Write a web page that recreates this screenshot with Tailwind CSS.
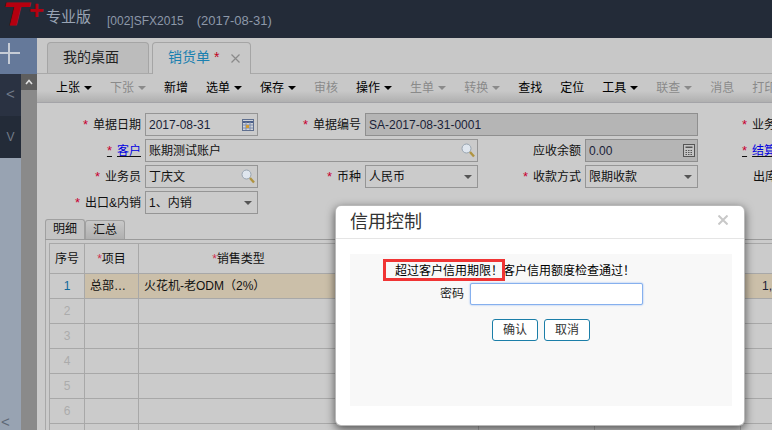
<!DOCTYPE html>
<html lang="zh-CN">
<head>
  <meta charset="UTF-8">
  <title>销货单</title>
  <script src="https://cdn.jsdelivr.net/npm/@tailwindcss/browser@4"></script>
</head>

<body class="w-[772px] h-[430px] overflow-hidden bg-[#c8c8c8] font-['Liberation_Sans','Noto_Sans_CJK_SC',sans-serif] text-[12px] leading-[16px] text-[#111]">
<div class="relative w-[772px] h-[430px] overflow-hidden flex flex-col">

  <!-- Top bar -->
  <header class="h-[38px] shrink-0 bg-[#232b38] flex items-start">
    <span class="ml-[3px] w-[25px] inline-block origin-left scale-x-[1.25] text-[32px] leading-[28px] font-bold italic text-[#b5000f] [-webkit-text-stroke:1px_#b5000f]">T</span>
    <span class="w-[17px] text-center text-[26px] leading-[20px] font-bold text-[#b5000f]">+</span>
    <span class="ml-[1px] mt-[7px] text-[15px] leading-[20px] text-[#99a4b4]">专业版</span>
    <span class="ml-[16px] mt-[13px] text-[#8d98a9]">[002]SFX2015</span>
    <span class="ml-[13px] mt-[13px] text-[13px] text-[#8d98a9]">(2017-08-31)</span>
  </header>

  <div class="flex-1 flex min-h-0">
    <!-- Left side -->
    <aside class="w-[37px] shrink-0 flex flex-col">
      <div class="h-[36px] bg-[#65799a] overflow-hidden">
        <svg width="37" height="36" fill="none" stroke="#c6ccd6" stroke-width="2"><path d="M0 15H20M9 5V26"/></svg>
      </div>
      <div class="flex-1 flex">
        <div class="w-[21px] flex flex-col text-[#727b89]">
          <div class="h-[42px] bg-[#2a3242] flex items-center justify-center text-[15px] pb-[2px]">&lt;</div>
          <div class="h-[42px] bg-[#232b38] flex items-center justify-center text-[12px]">V</div>
          <div class="flex-1 bg-[#98a3b2] flex items-end pl-[1px] text-[15px] text-[#5d6776]">&lt;</div>
        </div>
        <div class="w-[16px] bg-[#8a8a8a]">
          <div class="h-[16px] bg-[#5e5e5e] flex items-center justify-center">
            <svg width="8" height="6" fill="none" stroke="#e0e0e0" stroke-width="1.6"><path d="M1 5L4 1.5L7 5"/></svg>
          </div>
        </div>
      </div>
    </aside>

    <main class="flex-1 min-w-0 flex flex-col">
      <!-- Tabs -->
      <div class="h-[36px] shrink-0 flex items-end gap-[3px] pl-[10px] border-b border-[#a9a9a9]">
        <div class="w-[102px] h-[31px] bg-[#bcbcbc] border border-b-0 border-[#a5a5a5] rounded-t-[4px] pl-[15px] pt-[6px] text-[14px] text-[#222]">我的桌面</div>
        <div class="w-[99px] h-[32px] mb-[-1px] bg-[#c8c8c8] border border-b-0 border-[#a5a5a5] rounded-t-[4px] pl-[15px] pt-[6px] flex text-[14px] text-[#1a80b0]">
          <span>销货单</span><span class="ml-[4px] text-[#c00020]">*</span>
          <svg class="ml-[12px] mt-[5px]" width="9" height="9" stroke="#8a8a8a" stroke-width="1.2"><path d="M0.5 0.5L8.5 8.5M8.5 0.5L0.5 8.5"/></svg>
        </div>
      </div>

      <!-- Toolbar -->
      <div class="h-[29px] shrink-0 flex items-center gap-[18px] pl-[19px] bg-gradient-to-b from-[#c8c8c8] from-60% to-[#b0b0b0] border-b border-[#a4a4a8] whitespace-nowrap text-black overflow-hidden">
        <span class="shrink-0 flex items-center gap-[4px]">上张<i class="w-0 h-0 border-x-[4px] border-t-[4px] border-x-transparent border-t-black"></i></span>
        <span class="shrink-0 flex items-center gap-[4px] text-[#8a8a8a]">下张<i class="w-0 h-0 border-x-[4px] border-t-[4px] border-x-transparent border-t-[#8a8a8a]"></i></span>
        <span class="shrink-0">新增</span>
        <span class="shrink-0 flex items-center gap-[4px]">选单<i class="w-0 h-0 border-x-[4px] border-t-[4px] border-x-transparent border-t-black"></i></span>
        <span class="shrink-0 flex items-center gap-[4px]">保存<i class="w-0 h-0 border-x-[4px] border-t-[4px] border-x-transparent border-t-black"></i></span>
        <span class="shrink-0 text-[#8a8a8a]">审核</span>
        <span class="shrink-0 flex items-center gap-[4px]">操作<i class="w-0 h-0 border-x-[4px] border-t-[4px] border-x-transparent border-t-black"></i></span>
        <span class="shrink-0 flex items-center gap-[4px] text-[#8a8a8a]">生单<i class="w-0 h-0 border-x-[4px] border-t-[4px] border-x-transparent border-t-[#8a8a8a]"></i></span>
        <span class="shrink-0 flex items-center gap-[4px] text-[#8a8a8a]">转换<i class="w-0 h-0 border-x-[4px] border-t-[4px] border-x-transparent border-t-[#8a8a8a]"></i></span>
        <span class="shrink-0">查找</span>
        <span class="shrink-0">定位</span>
        <span class="shrink-0 flex items-center gap-[4px]">工具<i class="w-0 h-0 border-x-[4px] border-t-[4px] border-x-transparent border-t-black"></i></span>
        <span class="shrink-0 flex items-center gap-[4px] text-[#8a8a8a]">联查<i class="w-0 h-0 border-x-[4px] border-t-[4px] border-x-transparent border-t-[#8a8a8a]"></i></span>
        <span class="shrink-0 text-[#8a8a8a]">消息</span>
        <span class="shrink-0 text-[#8a8a8a]">打印</span>
      </div>

      <!-- Form -->
      <div class="flex-1 min-h-0 bg-[#cbcbcb] overflow-hidden">
        <div class="mt-[10px] grid grid-cols-[108px_113px_107px_113px_107px_113px_74px] auto-rows-[23px] gap-y-[3px] items-center whitespace-nowrap">
          <!-- row 1 -->
          <div class="text-right pr-[4px]"><span class="text-[#c8002f] text-[13px] mr-[5px]">*</span>单据日期</div>
          <div class="h-[23px] border border-[#959595] flex items-center justify-between pl-[3px] pr-[3px] text-[#1a2238]">2017-08-31
            <svg width="12" height="12"><rect x="0.5" y="0.5" width="11" height="11" fill="#cfd3da" stroke="#5f6f8f"/><path d="M1 3H11" stroke="#4a5f8a" stroke-width="2"/><path d="M4 3V11M8 3V11M1 6H11M1 9H11" stroke="#7c8cac"/><rect x="4" y="6" width="3" height="3" fill="#d09a30"/></svg>
          </div>
          <div class="text-right pr-[4px]"><span class="text-[#c8002f] text-[13px] mr-[5px]">*</span>单据编号</div>
          <div class="col-span-3 h-[23px] border border-[#8f8f8f] bg-[#b5b5b5] flex items-center pl-[3px] text-[#1a2238]">SA-2017-08-31-0001</div>
          <div class="pl-[44px] overflow-hidden"><span class="text-[#c8002f] text-[13px] mr-[5px]">*</span>业务类型</div>
          <!-- row 2 -->
          <div class="text-right pr-[4px]"><a href="#" class="underline"><span class="text-[#c8002f] text-[13px]">*</span><span class="ml-[5px] text-[#0000e0]">客户</span></a></div>
          <div class="col-span-3 h-[23px] border border-[#959595] flex items-center justify-between pl-[3px] pr-[2px]">账期测试账户
            <svg width="14" height="15" fill="none"><circle cx="5.5" cy="5.5" r="4.5" fill="#dfe6ee" stroke="#98a4b0"/><path d="M9 9L13 13.5" stroke="#b09440" stroke-width="2.4"/></svg>
          </div>
          <div class="text-right pr-[4px]">应收余额</div>
          <div class="h-[23px] border border-[#8f8f8f] bg-[#b5b5b5] flex items-center justify-between pl-[3px] pr-[2px] text-[#1a2238]">0.00
            <svg width="12" height="13"><rect x="0.5" y="0.5" width="11" height="12" fill="#c4c4c4" stroke="#555"/><rect x="2.5" y="2.5" width="7" height="1.5" fill="#555"/><path d="M2.5 6.5H9.5M2.5 8.5H9.5M2.5 10.5H9.5" stroke="#555" stroke-dasharray="1.5 1"/></svg>
          </div>
          <div class="pl-[44px] overflow-hidden"><a href="#" class="underline"><span class="text-[#c8002f] text-[13px]">*</span><span class="ml-[5px] text-[#0000e0]">结算方式</span></a></div>
          <!-- row 3 -->
          <div class="text-right pr-[4px]"><span class="text-[#c8002f] text-[13px] mr-[5px]">*</span>业务员</div>
          <div class="h-[23px] border border-[#959595] flex items-center justify-between pl-[3px] pr-[2px]">丁庆文
            <svg width="14" height="15" fill="none"><circle cx="5.5" cy="5.5" r="4.5" fill="#dfe6ee" stroke="#98a4b0"/><path d="M9 9L13 13.5" stroke="#b09440" stroke-width="2.4"/></svg>
          </div>
          <div class="text-right pr-[4px]"><span class="text-[#c8002f] text-[13px] mr-[5px]">*</span>币种</div>
          <div class="h-[23px] border border-[#959595] flex items-center justify-between pl-[3px] pr-[5px]">人民币<i class="w-0 h-0 border-x-[4px] border-t-[4px] border-x-transparent border-t-[#555]"></i></div>
          <div class="text-right pr-[4px]"><span class="text-[#c8002f] text-[13px] mr-[5px]">*</span>收款方式</div>
          <div class="h-[23px] border border-[#959595] flex items-center justify-between pl-[3px] pr-[5px]">限期收款<i class="w-0 h-0 border-x-[4px] border-t-[4px] border-x-transparent border-t-[#555]"></i></div>
          <div class="pl-[55px] overflow-hidden">出库日期</div>
          <!-- row 4 -->
          <div class="text-right pr-[4px]"><span class="text-[#c8002f] text-[13px] mr-[5px]">*</span>出口&amp;内销</div>
          <div class="h-[23px] border border-[#959595] flex items-center justify-between pl-[3px] pr-[5px]">1、内销<i class="w-0 h-0 border-x-[4px] border-t-[4px] border-x-transparent border-t-[#555]"></i></div>
        </div>

        <!-- Sub tabs -->
        <div class="mt-[5px] ml-[8px] flex items-end h-[21px] border-b border-[#9a9a9a]">
          <div class="w-[40px] h-[20px] bg-[#c4c4c4] border border-b-0 border-[#a0a0a0] rounded-t-[3px] text-center leading-[19px] text-[#111]">明细</div>
          <div class="w-[40px] h-[19px] bg-gradient-to-b from-[#c8c8c8] to-[#b0b0b0] border border-b-0 border-[#a0a0a0] rounded-t-[3px] text-center leading-[18px] text-[#111]">汇总</div>
        </div>

        <!-- Grid -->
        <div class="ml-[8px] pl-[3px] pt-[3px] border-l border-[#a8a8a8]">
          <table class="table-fixed border-collapse w-[800px]">
            <colgroup><col class="w-[35px]"><col class="w-[54px]"><col class="w-[340px]"><col class="w-[116px]"><col class="w-[146px]"><col class="w-[109px]"></colgroup>
            <thead>
              <tr class="h-[30px]">
                <th class="border border-[#a8a8a8] font-normal">序号</th>
                <th class="border border-[#a8a8a8] font-normal"><span class="text-[#d03050]">*</span>项目</th>
                <th class="border border-[#a8a8a8] font-normal pr-[140px]"><span class="text-[#d03050]">*</span>销售类型</th>
                <th class="border border-[#a8a8a8]"></th><th class="border border-[#a8a8a8]"></th><th class="border border-[#a8a8a8]"></th>
              </tr>
            </thead>
            <tbody>
              <tr class="h-[25px]">
                <td class="border border-[#a8a8a8] text-center text-[#10689a]">1</td>
                <td class="border border-[#a8a8a8] bg-[#cbbfa9] pl-[5px]">总部…</td>
                <td class="border border-[#a8a8a8] bg-[#cbbfa9] pl-[5px]">火花机-老ODM（2%）</td>
                <td class="border border-[#a8a8a8] bg-[#cbbfa9]"></td><td class="border border-[#a8a8a8] bg-[#cbbfa9]"></td>
                <td class="border border-[#a8a8a8] bg-[#cbbfa9] pl-[21px] text-[#1a2238]">1,000</td>
              </tr>
              <tr class="h-[25px]"><td class="border border-[#a8a8a8] text-center text-[#ababab]">2</td><td class="border border-[#a8a8a8]"></td><td class="border border-[#a8a8a8]"></td><td class="border border-[#a8a8a8]"></td><td class="border border-[#a8a8a8]"></td><td class="border border-[#a8a8a8]"></td></tr>
              <tr class="h-[25px]"><td class="border border-[#a8a8a8] text-center text-[#ababab]">3</td><td class="border border-[#a8a8a8]"></td><td class="border border-[#a8a8a8]"></td><td class="border border-[#a8a8a8]"></td><td class="border border-[#a8a8a8]"></td><td class="border border-[#a8a8a8]"></td></tr>
              <tr class="h-[25px]"><td class="border border-[#a8a8a8] text-center text-[#ababab]">4</td><td class="border border-[#a8a8a8]"></td><td class="border border-[#a8a8a8]"></td><td class="border border-[#a8a8a8]"></td><td class="border border-[#a8a8a8]"></td><td class="border border-[#a8a8a8]"></td></tr>
              <tr class="h-[25px]"><td class="border border-[#a8a8a8] text-center text-[#ababab]">5</td><td class="border border-[#a8a8a8]"></td><td class="border border-[#a8a8a8]"></td><td class="border border-[#a8a8a8]"></td><td class="border border-[#a8a8a8]"></td><td class="border border-[#a8a8a8]"></td></tr>
              <tr class="h-[25px]"><td class="border border-[#a8a8a8] text-center text-[#ababab]">6</td><td class="border border-[#a8a8a8]"></td><td class="border border-[#a8a8a8]"></td><td class="border border-[#a8a8a8]"></td><td class="border border-[#a8a8a8]"></td><td class="border border-[#a8a8a8]"></td></tr>
              <tr class="h-[25px]"><td class="border border-[#a8a8a8]"></td><td class="border border-[#a8a8a8]"></td><td class="border border-[#a8a8a8]"></td><td class="border border-[#a8a8a8]"></td><td class="border border-[#a8a8a8]"></td><td class="border border-[#a8a8a8]"></td></tr>
            </tbody>
          </table>
        </div>
      </div>
    </main>
  </div>

  <!-- Modal -->
  <div class="absolute left-[335px] top-[205px] w-[410px] h-[221px] bg-white rounded-[6px] border border-[#8a8a8a]/60 shadow-[0_3px_10px_rgba(0,0,0,0.6)] flex flex-col">
    <div class="h-[33px] shrink-0 border-b border-[#e5e5e5] flex items-start justify-between pl-[14px] pr-[16px]">
      <span class="text-[18px] leading-[24px] mt-[4px] text-[#333]">信用控制</span>
      <svg class="mt-[9px]" width="10" height="10" stroke="#c8c8c8" stroke-width="2"><path d="M0.5 0.5L9.5 9.5M9.5 0.5L0.5 9.5"/></svg>
    </div>
    <div class="ml-[14px] w-[382px] mt-[15px] h-[152px] bg-[#f8f8f8] flex flex-col relative">
      <div class="pl-[45px] pt-[9px] whitespace-nowrap text-black">超过客户信用期限！客户信用额度检查通过！</div>
      <div class="flex items-center mt-[4px] h-[22px]">
        <span class="ml-[90px] text-[#222]">密码</span>
        <div class="ml-[6px] w-[173px] h-[22px] bg-white border border-[#86b0ee] rounded-[2px] shadow-[0_0_2px_#86b0ee]"></div>
      </div>
      <div class="flex gap-[6px] ml-[142px] mt-[14px]">
        <button class="w-[46px] h-[22px] border border-[#1b7ea8] rounded-[3px] bg-white text-[#333] text-[12px]">确认</button>
        <button class="w-[46px] h-[22px] border border-[#1b7ea8] rounded-[3px] bg-white text-[#333] text-[12px]">取消</button>
      </div>
      <!-- red annotation box -->
      <div class="absolute left-[33px] top-[5px] w-[122px] h-[22px] border-[3px] border-[#f03434]"></div>
    </div>
  </div>

</div>
</body>
</html>
